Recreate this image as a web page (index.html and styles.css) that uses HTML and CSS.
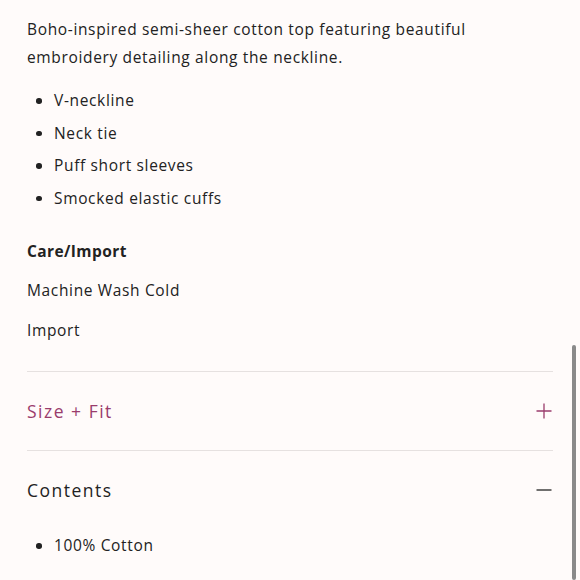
FILE: index.html
```html
<!DOCTYPE html>
<html lang="en">
<head>
<meta charset="utf-8">
<title>Product details</title>
<link rel="stylesheet" href="styles.css">
</head>
<body>
<main class="details">
  <section class="description">
    <p class="intro">Boho-inspired semi-sheer cotton top featuring beautiful embroidery detailing along the neckline.</p>
    <ul class="bullets">
      <li>V-neckline</li>
      <li>Neck tie</li>
      <li>Puff short sleeves</li>
      <li>Smocked elastic cuffs</li>
    </ul>
    <h3 class="care-title">Care/Import</h3>
    <p class="care-line">Machine Wash Cold</p>
    <p class="care-line">Import</p>
  </section>
  <section class="accordion">
    <div class="acc-item">
      <div class="acc-head acc-closed">
        <span class="acc-title">Size + Fit</span>
        <svg class="acc-icon" width="16" height="16" viewBox="0 0 16 16"><path d="M8 0.5V15.5M0.5 8H15.5" stroke="currentColor" stroke-width="1.3" fill="none"/></svg>
      </div>
    </div>
    <div class="acc-item acc-open">
      <div class="acc-head">
        <span class="acc-title">Contents</span>
        <svg class="acc-icon" width="16" height="16" viewBox="0 0 16 16"><path d="M0.5 8H15.5" stroke="currentColor" stroke-width="1.3" fill="none"/></svg>
      </div>
      <ul class="bullets acc-body">
        <li>100% Cotton</li>
      </ul>
    </div>
  </section>
</main>
<div class="scrollbar"></div>
</body>
</html>
```
FILE: styles.css
```css
html, body {
  margin: 0;
  padding: 0;
  background: #fffbfa;
}
body {
  font-family: "Open Sans", "Liberation Sans", sans-serif;
  color: #222;
  font-size: 15.5px;
  letter-spacing: 0.65px;
  height: 580px;
  overflow: hidden;
}
.details {
  padding: 15px 27px 0 27px;
}
.intro {
  margin: 0;
  max-width: 480px;
  line-height: 28px;
}
.bullets {
  margin: 13px 0 0 0;
  padding: 0 0 0 27px;
  list-style: none;
}
.bullets li {
  position: relative;
  line-height: 32.5px;
}
.bullets li::before {
  content: "";
  position: absolute;
  left: -18px;
  top: 14px;
  width: 5.5px;
  height: 5.5px;
  border-radius: 50%;
  background: #222;
}
.care-title {
  margin: 23px 0 0 0;
  font-size: 15.5px;
  font-weight: 700;
  letter-spacing: 0.4px;
  line-height: 28px;
}
.care-line {
  margin: 11px 0 0 0;
  line-height: 28px;
}
.care-line + .care-line {
  margin-top: 12px;
}
.accordion {
  margin-top: 27px;
}
.acc-item {
  border-top: 1px solid #e6e1e0;
}
.acc-head {
  display: flex;
  justify-content: space-between;
  align-items: center;
  height: 78px;
}
.acc-title {
  font-size: 17.5px;
  letter-spacing: 1.5px;
}
.acc-open .acc-head {
  padding-bottom: 1px;
  height: 77px;
}
.acc-closed {
  color: #9a3c6c;
}
.acc-icon {
  display: block;
  margin-right: 1px;
}
.acc-body {
  margin-top: 0;
}
.acc-body li {
  line-height: 32px;
}
.scrollbar {
  position: absolute;
  left: 572px;
  top: 345px;
  width: 4px;
  height: 235px;
  background: #8a8a8a;
  border-radius: 2px;
}
```
